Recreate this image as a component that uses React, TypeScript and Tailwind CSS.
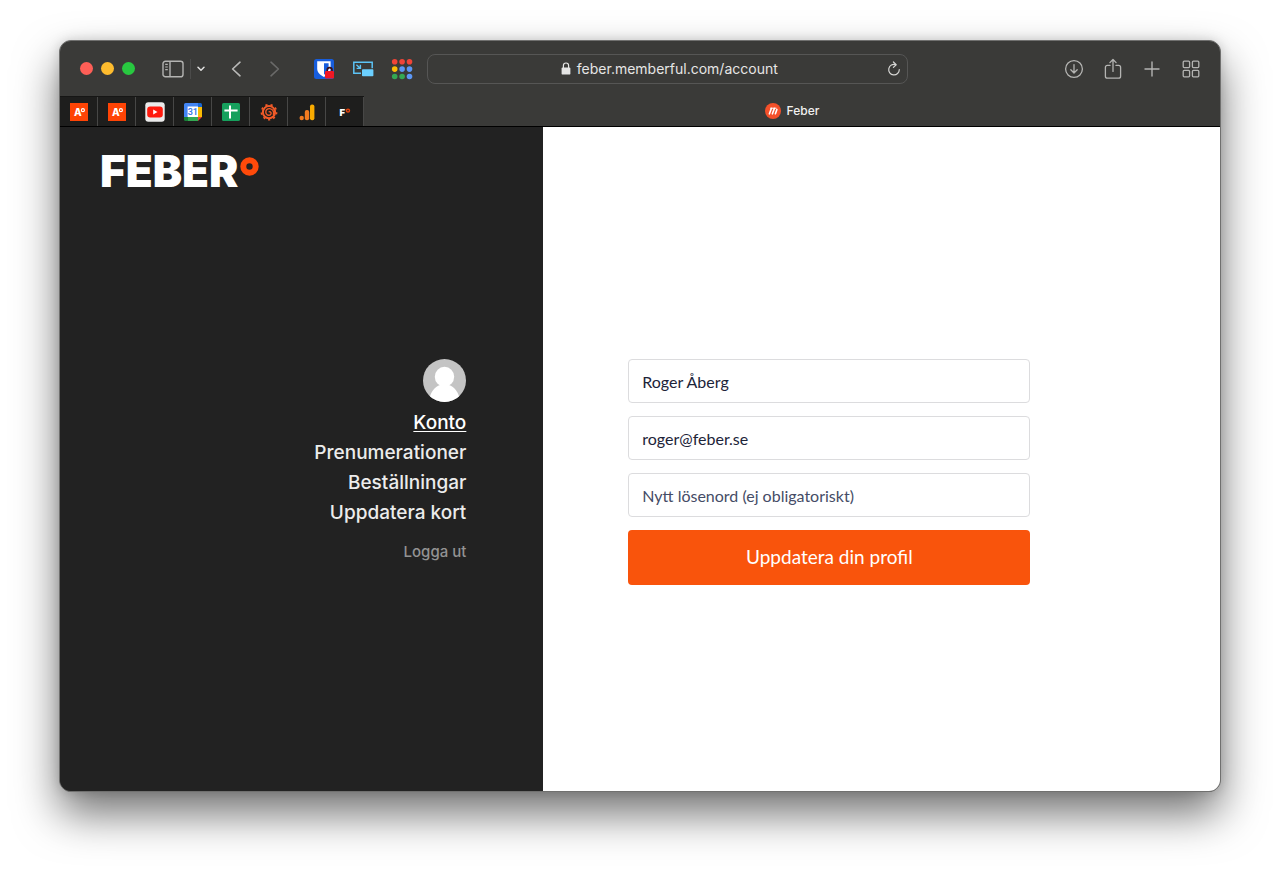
import type { ReactNode } from "react";

function IconButton({ label, className = "", children }: { label: string; className?: string; children: ReactNode }) {
  return (
    <button type="button" aria-label={label} className={`flex h-6 shrink-0 items-center justify-center ${className}`}>
      {children}
    </button>
  );
}

function SidebarIcon() {
  return (
    <svg width="22" height="18" viewBox="0 0 22 18" fill="none" stroke="#b4b4b2" strokeWidth="1.4">
      <rect x="1" y="1.2" width="20" height="15.6" rx="2.4" />
      <path d="M8 1.2v15.6" />
      <path d="M3.2 4.4h2.6M3.2 7h2.6M3.2 9.6h2.6" strokeWidth="1.1" />
    </svg>
  );
}

function BitwardenIcon() {
  return (
    <svg width="22" height="22" viewBox="0 0 22 22">
      <rect x="1" y="1" width="20" height="20" rx="2.5" fill="#175ddc" />
      <path d="M4.2 3.2h13.4v7.6c0 4-3.6 6.6-6.7 8.2-3.1-1.6-6.7-4.2-6.7-8.2z" fill="#fff" />
      <path d="M11 5.2h4.6v5.6c0 2.6-2.3 4.6-4.6 6z" fill="#175ddc" />
      <path d="M14.2 14v-2a2.4 2.4 0 0 1 4.8 0v2" fill="none" stroke="#3b1014" strokeWidth="1.6" />
      <rect x="12" y="13" width="9" height="7.4" rx="1" fill="#f01824" />
    </svg>
  );
}

function PipIcon() {
  return (
    <svg width="22" height="18" viewBox="0 0 22 18" fill="none" stroke="#5cc3f5" strokeWidth="1.5">
      <path d="M9 13.2H1.8V2.2h18.4v6" />
      <rect x="10" y="9.2" width="11.4" height="7" rx="0.8" fill="#6bd0ff" stroke="none" />
      <path d="M4.4 4.8l3.8 3.4M8.4 4.8v3.6H4.6" strokeWidth="1.4" />
    </svg>
  );
}

const DOTS = ["#f04437", "#f04437", "#f04437", "#fbbc05", "#5c97f5", "#5c97f5", "#34a853", "#34a853", "#5c97f5"];

function AppsIcon() {
  return (
    <svg width="22" height="22" viewBox="0 0 22 22">
      {DOTS.map((fill, i) => (
        <circle key={i} cx={3.7 + (i % 3) * 7.4} cy={3.7 + Math.floor(i / 3) * 7.4} r="2.8" fill={fill} />
      ))}
    </svg>
  );
}

function LockIcon() {
  return (
    <svg width="10" height="13" viewBox="0 0 10 13">
      <rect x="0.6" y="5.4" width="8.8" height="7.2" rx="1.2" fill="#e4e4e3" />
      <path d="M2.4 6V3.6a2.6 2.6 0 0 1 5.2 0V6" fill="none" stroke="#e4e4e3" strokeWidth="1.2" />
    </svg>
  );
}

function ReloadIcon() {
  return (
    <svg width="14" height="16" viewBox="0 0 14 16" fill="none" stroke="#d4d4d2" strokeWidth="1.2" strokeLinecap="round" strokeLinejoin="round">
      <path d="M8.6 3.6A5.3 5.3 0 1 0 12.3 8.6" />
      <path d="M6.4 1l2.8 2.7-2.8 2.7" />
    </svg>
  );
}

function DownloadIcon() {
  return (
    <svg width="20" height="20" viewBox="0 0 20 20" fill="none" stroke="#b4b4b2" strokeWidth="1.3" strokeLinecap="round" strokeLinejoin="round">
      <circle cx="10" cy="10" r="8.4" />
      <path d="M10 5.6v8.2M6.8 10.8l3.2 3.2 3.2-3.2" />
    </svg>
  );
}

function ShareIcon() {
  return (
    <svg width="18" height="22" viewBox="0 0 18 22" fill="none" stroke="#b4b4b2" strokeWidth="1.3" strokeLinecap="round" strokeLinejoin="round">
      <path d="M6 7.4H3.4a2 2 0 0 0-2 2v8.8a2 2 0 0 0 2 2h11.2a2 2 0 0 0 2-2V9.4a2 2 0 0 0-2-2H12" />
      <path d="M9 13.4V1.6M5.9 4.6L9 1.5l3.1 3.1" />
    </svg>
  );
}

function GridIcon() {
  return (
    <svg width="18" height="18" viewBox="0 0 18 18" fill="none" stroke="#b4b4b2" strokeWidth="1.3">
      <rect x="1.2" y="1.2" width="6.4" height="6.4" rx="1" />
      <rect x="10.4" y="1.2" width="6.4" height="6.4" rx="1" />
      <rect x="1.2" y="10.4" width="6.4" height="6.4" rx="1" />
      <rect x="10.4" y="10.4" width="6.4" height="6.4" rx="1" />
    </svg>
  );
}

function ABadge() {
  return (
    <svg width="18" height="18" viewBox="0 0 18 18">
      <rect width="18" height="18" fill="#ff4405" />
      <text x="4" y="12.6" fontSize="10" fontWeight="800" fill="#fff" fontFamily="Inter, sans-serif">A</text>
      <circle cx="12.9" cy="7.2" r="1.5" fill="none" stroke="#fff" strokeWidth="1.2" />
    </svg>
  );
}

function YoutubeIcon() {
  return (
    <svg width="20" height="20" viewBox="0 0 20 20">
      <rect x="0.3" y="0.3" width="19.4" height="19.4" rx="3" fill="#ebebeb" />
      <rect x="2.2" y="4.4" width="15.6" height="11.2" rx="3" fill="#ff1a0d" />
      <path d="M8.2 7.6v4.8l4.3-2.4z" fill="#fff" />
    </svg>
  );
}

function CalendarIcon() {
  return (
    <svg width="18" height="18" viewBox="0 0 18 18">
      <path d="M1.6 0h13v4H4v10H0V1.6A1.6 1.6 0 0 1 1.6 0z" fill="#4285f4" />
      <path d="M14 0h2.4A1.6 1.6 0 0 1 18 1.6V4h-4z" fill="#1967d2" />
      <path d="M14 4h4v10h-4z" fill="#fbbc04" />
      <path d="M4 14h10v4H4z" fill="#34a853" />
      <path d="M0 14h4v4H1.6A1.6 1.6 0 0 1 0 16.4z" fill="#188038" />
      <path d="M14 14h4l-4 4z" fill="#ea4335" />
      <path d="M3.6 3.6H14V14H3.6z" fill="#fff" />
      <text x="8.8" y="12" textAnchor="middle" fontSize="9" fontWeight="600" fill="#3b78e7" fontFamily="Roboto, sans-serif">31</text>
    </svg>
  );
}

function SheetsIcon() {
  return (
    <svg width="18" height="18" viewBox="0 0 18 18">
      <rect width="18" height="18" rx="1.6" fill="#16a05d" />
      <path d="M8 2.4V15.6M2.4 7.6h13.2" stroke="#fff" strokeWidth="2" />
    </svg>
  );
}

function GrafanaIcon() {
  return (
    <svg width="18" height="18" viewBox="0 0 18 18" fill="none" stroke="#f05a28">
      <circle cx="9" cy="9.2" r="6.1" strokeWidth="2" />
      <circle cx="9" cy="9.2" r="7.5" strokeWidth="1.8" strokeDasharray="2.2 3.035" />
      <path d="M13.4 11.4c.9-3-1-5.6-3.7-5.8-2.400-.2-4 1.600-3.900 3.600.1 1.900 1.600 3.100 3.200 3 1.400-.1 2.300-1.200 2.100-2.300-.2-1-1.200-1.500-2-1.100" strokeWidth="1.4" strokeLinecap="round" />
    </svg>
  );
}

function AnalyticsIcon() {
  return (
    <svg width="16" height="18" viewBox="0 0 16 18">
      <rect x="11" y="1.400" width="4.400" height="15.800" rx="2" fill="#f9ab00" />
      <rect x="5.800" y="7" width="4.400" height="10.200" rx="2" fill="#f47b20" />
      <circle cx="2.700" cy="15" r="2.200" fill="#f47b20" />
    </svg>
  );
}

function FeberIcon() {
  return (
    <svg width="18" height="18" viewBox="0 0 18 18">
      <text x="3.400" y="12.500" fontSize="9.500" fontWeight="900" fill="#fff" fontFamily="Inter, sans-serif">F</text>
      <circle cx="12" cy="7.600" r="1.500" fill="none" stroke="#e8430c" strokeWidth="1.400" />
    </svg>
  );
}

function MemberfulIcon() {
  return (
    <svg width="16" height="16" viewBox="0 0 16 16">
      <circle cx="8" cy="8" r="8" fill="#f4502a" />
      <path d="M4.400 10.800l2-5.400M7.400 10.800l2-5.400M10.400 10.800l1.500-4.400" stroke="#fff" strokeWidth="1.600" strokeLinecap="round" />
      <path d="M5.600 5.200h5.400" stroke="#fff" strokeWidth="1" strokeLinecap="round" />
    </svg>
  );
}

const PINNED: { name: string; icon: ReactNode }[] = [
  { name: "A", icon: <ABadge /> },
  { name: "A", icon: <ABadge /> },
  { name: "YouTube", icon: <YoutubeIcon /> },
  { name: "Calendar", icon: <CalendarIcon /> },
  { name: "Sheets", icon: <SheetsIcon /> },
  { name: "Grafana", icon: <GrafanaIcon /> },
  { name: "Analytics", icon: <AnalyticsIcon /> },
  { name: "Feber", icon: <FeberIcon /> },
];

function Toolbar() {
  return (
    <div className="flex h-[55px] items-center pl-5 pr-5">
      <div className="flex w-[347px] shrink-0 items-center">
        <div className="flex gap-2">
          <button type="button" aria-label="Stäng" className="size-[13px] rounded-full bg-[#fe5f57]" />
          <button type="button" aria-label="Minimera" className="size-[13px] rounded-full bg-[#febc2e]" />
          <button type="button" aria-label="Zooma" className="size-[13px] rounded-full bg-[#28c840]" />
        </div>
        <IconButton label="Sidofält" className="ml-[27px]"><SidebarIcon /></IconButton>
        <span className="ml-1.5 h-5 w-px bg-[#4b4b4a]" />
        <IconButton label="Flikgrupper" className="ml-1.5">
          <svg width="8" height="6" viewBox="0 0 8 6" fill="none" stroke="#dededd" strokeWidth="1.500" strokeLinecap="round" strokeLinejoin="round"><path d="M1 1.200l3 3 3-3" /></svg>
        </IconButton>
        <IconButton label="Bakåt" className="ml-[26px]">
          <svg width="11" height="16" viewBox="0 0 11 16" fill="none" stroke="#b9b9b8" strokeWidth="1.600" strokeLinecap="round" strokeLinejoin="round"><path d="M9 1.200L1.600 8 9 14.800" /></svg>
        </IconButton>
        <IconButton label="Framåt" className="ml-[27px]">
          <svg width="11" height="16" viewBox="0 0 11 16" fill="none" stroke="#6a6a69" strokeWidth="1.600" strokeLinecap="round" strokeLinejoin="round"><path d="M2 1.200L9.400 8 2 14.800" /></svg>
        </IconButton>
        <IconButton label="Bitwarden" className="ml-[33px]"><BitwardenIcon /></IconButton>
        <IconButton label="Bild i bild" className="ml-[17px]"><PipIcon /></IconButton>
        <IconButton label="Appar" className="ml-[17px]"><AppsIcon /></IconButton>
      </div>
      <div className="flex h-[30px] flex-[468] items-center rounded-lg border border-[#565655] pl-6 pr-1.5">
        <div className="flex flex-1 items-center justify-center gap-1.5 text-sm text-[#e6e6e5]">
          <LockIcon />
          <span>feber.memberful.com/account</span>
        </div>
        <IconButton label="Ladda om"><ReloadIcon /></IconButton>
      </div>
      <div className="flex flex-[305] items-center justify-end gap-5">
        <IconButton label="Hämtningar"><DownloadIcon /></IconButton>
        <IconButton label="Dela"><ShareIcon /></IconButton>
        <IconButton label="Ny flik">
          <svg width="20" height="16" viewBox="0 0 20 16" stroke="#b4b4b2" strokeWidth="1.400" strokeLinecap="round"><path d="M10 1v14M3 8h14" /></svg>
        </IconButton>
        <IconButton label="Fliköversikt"><GridIcon /></IconButton>
      </div>
    </div>
  );
}

function TabBar() {
  return (
    <div className="flex h-[31px] border-b border-black">
      <div className="flex border-t border-[#161615] bg-[#1e1e1d]">
        {PINNED.map((tab, i) => (
          <button key={i} type="button" aria-label={tab.name} className="flex w-[38px] items-center justify-center border-r border-[#474746]">
            {tab.icon}
          </button>
        ))}
      </div>
      <button type="button" className="flex flex-1 items-center justify-center gap-1.5 text-xs font-medium text-[#f1f1f0]">
        <MemberfulIcon />
        Feber
      </button>
    </div>
  );
}

const LINKS = ["Konto", "Prenumerationer", "Beställningar", "Uppdatera kort"];
const FIELD = "h-11 w-full rounded-sm border border-[#dcdcde] bg-white px-[13px] text-base text-[#1d2439] outline-none placeholder:text-[#454c66] placeholder:opacity-100";

export default function App() {
  return (
    <div className="min-h-screen bg-white px-[59px] pb-[78px] pt-10 font-['Inter',sans-serif]">
      <div className="overflow-hidden rounded-xl border border-[#70706f] bg-[#3a3a38] shadow-[0_22px_44px_rgba(0,0,0,0.55),0_0_12px_rgba(0,0,0,0.15)]">
        <Toolbar />
        <TabBar />
        <div className="flex min-h-[664px]">
          <aside className="flex w-5/12 flex-col bg-[#222222] pl-10 pr-[77px]">
            <a href="#" aria-label="Feber" className="mt-5 flex h-12 items-start gap-0.5 self-start text-[44px] font-black leading-[48px] text-white">
              FEBER
              <svg className="mt-2.5" width="19" height="19" viewBox="0 0 19 19" fill="none"><circle cx="9.500" cy="9.500" r="6.200" stroke="#ff4a0a" strokeWidth="6" /></svg>
            </a>
            <nav className="mt-[164px] flex flex-col items-end text-[19px] font-medium leading-[30px] text-[#ececec]">
              <svg className="mb-1.5" width="43" height="43" viewBox="0 0 43 43">
                <defs><clipPath id="avatar"><circle cx="21.500" cy="21.500" r="21.500" /></clipPath></defs>
                <g clipPath="url(#avatar)">
                  <rect width="43" height="43" fill="#c4c4c4" />
                  <ellipse cx="21.500" cy="17.800" rx="9.700" ry="10" fill="#fff" />
                  <path d="M6 43c.6-9.500 6-15.500 11-17h9c5 1.500 10.400 7.500 11 17z" fill="#fff" />
                </g>
              </svg>
              {LINKS.map((link, i) => (
                <a key={link} href="#" className={i === 0 ? "text-white underline underline-offset-2" : ""}>{link}</a>
              ))}
              <a href="#" className="mt-3 text-[15px] leading-6 text-[#939393]">Logga ut</a>
            </nav>
          </aside>
          <main className="flex-1 bg-white pl-[85px] pr-10 pt-[232px] font-['Lato',sans-serif]">
            <form className="flex max-w-[402px] flex-col gap-[13px]" onSubmit={(e) => e.preventDefault()}>
              <input aria-label="Namn" type="text" defaultValue="Roger Åberg" className={FIELD} />
              <input aria-label="E-post" type="email" defaultValue="roger@feber.se" className={FIELD} />
              <input aria-label="Nytt lösenord" type="password" placeholder="Nytt lösenord (ej obligatoriskt)" className={FIELD} />
              <button type="submit" className="h-[55px] rounded-sm bg-[#f9540c] text-[19px] text-white">Uppdatera din profil</button>
            </form>
          </main>
        </div>
      </div>
    </div>
  );
}
